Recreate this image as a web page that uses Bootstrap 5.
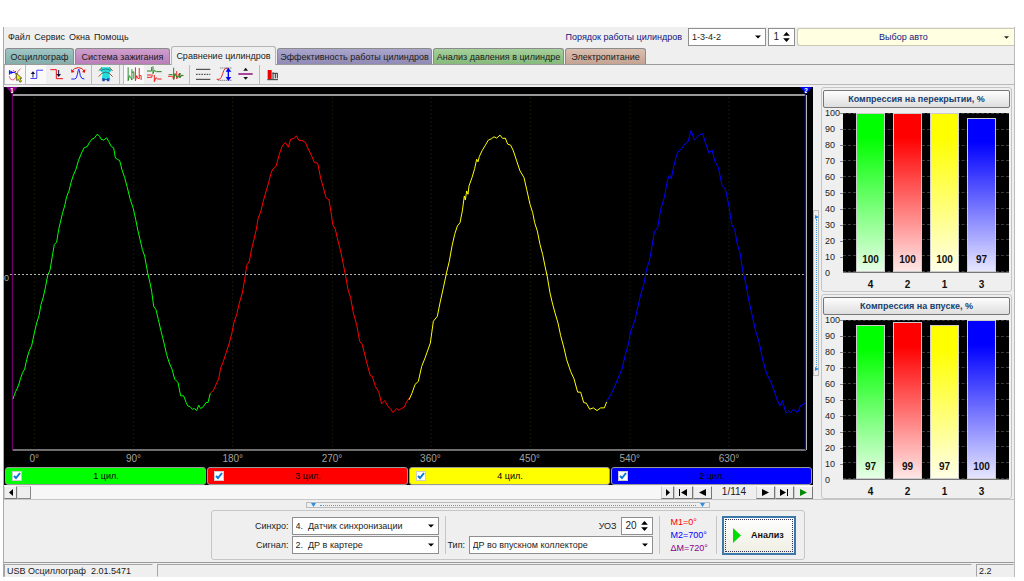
<!DOCTYPE html>
<html lang="ru">
<head>
<meta charset="utf-8">
<meta name="viewport" content="width=device-width, initial-scale=1">
<title>USB Осциллограф</title>
<link href="https://cdn.jsdelivr.net/npm/bootstrap@5.3.0/dist/css/bootstrap.min.css" rel="stylesheet">
<style>
:root{--face:#efefef;--edge:#9a9a9a;--soft:#c6c6c6;--navy:#14147c}
body{font-family:"Liberation Sans",Arial,sans-serif;font-size:9px;line-height:12px;color:#1c1c1c;background:#fff}
button,input,select{font:inherit;color:inherit}
.app{padding:27px 9px 4px 3px}
.win{background:var(--face);border-left:1px solid #aaa;border-right:1px solid #bbb}
.win button{white-space:nowrap}

.menubar{height:20px}
.menubar a{color:inherit;text-decoration:none}
.headctl{gap:2px}
.navy{color:var(--navy)}
.combo{height:18px;padding:0 16px 0 3px;border:1px solid #8f8f8f;border-radius:0;appearance:none;background:#fff url("data:image/svg+xml,%3Csvg xmlns='http://www.w3.org/2000/svg' viewBox='0 0 8 4'%3E%3Cpath d='M0 0h8L4 4z'/%3E%3C/svg%3E") no-repeat right 4px center/6px 4px}
.spin{height:18px;border:1px solid #8f8f8f;background:#fff}
.spin input{width:15px;border:0;padding:0;text-align:right;background:none;font-size:10px;appearance:textfield;outline:0}
.spin .short{width:10px}
.spin input::-webkit-inner-spin-button{display:none}
.order{width:78px}
.auto{width:217px;height:18px;padding:0 5px;border:1px solid #c9c9b4;border-right:0;border-radius:3px 0 0 3px;background:#ffffe1}

.tabs{border-bottom:1px solid var(--edge);height:18px;padding-left:1px;gap:1px}
.tabs button{height:16px;padding:0;border:1px solid #8a8a8a;border-bottom:0;border-radius:3px 3px 0 0;flex:0 0 auto}
.tabs .on{height:19px;margin-bottom:-1px;border-color:#b5b5b5;background:var(--face)}
.t1{width:69px;background:linear-gradient(#9fc6c5,#83acaa)}
.t2{width:95px;background:linear-gradient(#cf9fcd,#b97fb8)}
.t3{width:105px}
.t4{width:155px;background:linear-gradient(#aaa5cc,#908ab4)}
.t5{width:131px;background:linear-gradient(#a5d09b,#86b97b)}
.t6{width:81px;background:linear-gradient(#dabfb0,#c4a392)}

.tools{height:20px;border-bottom:1px solid #b9b9b9}
.tools button{width:21px;height:19px;padding:0;border:0;background:none;display:block}
.tools button.down{background:#f9f9f9;border-left:1px solid #bbb}
.tools svg{display:block;width:100%;height:19px;fill:none;stroke-width:3}
.tools i{width:7px;height:19px;background:linear-gradient(#bbb,#bbb) center/1px 100% no-repeat}

.work{padding-top:2px}
.trace{min-width:0}
.scope{background:#000}
.plotbox{margin:7px 7px 0 8px;min-height:300px}
.plotbox svg{display:block;width:100%;height:100%;position:absolute;inset:0;overflow:visible}
.plotbox polyline,.plotbox line{fill:none;vector-effect:non-scaling-stroke}
.zero{left:-8px;top:50%;color:#aaa}
.flag{top:-7px;width:12px;height:7px;clip-path:polygon(0 0,100% 0,50% 100%);color:#fff;font-size:7px;line-height:7px;font-weight:bold;text-align:center}
.axis{height:17px;margin:0 7px 0 8px;color:#a0a0a0;font-size:10px}
.axis span{position:absolute;top:3px;transform:translateX(-50%)}
.chans{gap:1px;padding:0 1px}
.chan{height:18px;border:1px solid #999;border-radius:3px;color:#000}
.chan label{padding-right:15px}
.chan input{appearance:none;width:10px;height:10px;margin:0 0 0 6px;border:1px solid #ccc;background:#fff}
.chan input:checked{background:#fff url("data:image/svg+xml,%3Csvg xmlns='http://www.w3.org/2000/svg' viewBox='0 0 8 8'%3E%3Cpath d='M1 4l2 2 4-5' fill='none' stroke='%230a7bd8' stroke-width='2'/%3E%3C/svg%3E") center/8px 8px no-repeat}

.player{height:13px;margin-top:1px;background:#f7f7f7}
.player button{height:13px;padding:0;border:1px solid;border-color:#fff #777 #777 #ccc;background:var(--face);display:flex;align-items:center;justify-content:center}
.player svg{height:7px;display:block}
.player .b1{width:13px}
.player .b2{width:19px}
.player output{width:44px;text-align:center;font-size:10px;background:var(--face)}
.seek{appearance:none;min-width:0;height:13px;margin:0;background:#f7f7f7}
.seek::-webkit-slider-thumb{appearance:none;width:14px;height:13px;background:var(--face);border:1px solid;border-color:#ddd #888 #888 #ddd}

.vgrip{width:6px;height:166px;border:1px solid #bbb}
.vgrip span{width:1px;border-left:1px dotted #4b9fe0}
.hgrip{width:404px;height:6px;border:1px solid #bbb;padding:0 4px}
.hgrip span{height:1px;border-top:1px dotted #4b9fe0;margin:0 4px}
.vgrip svg,.hgrip svg{width:5px;height:4px;fill:#2a8fe0;display:block}

.side{width:191px;gap:2px;margin:0 2px}
.gauge{border:1px solid var(--soft);border-radius:3px;padding:2px 1px 0 1px}
.gauge h2{margin:0}
.gauge h2 button{width:100%;height:18px;padding:0;border:1px solid #777;border-radius:2px;background:linear-gradient(#fdfdfd,#dedede);font-size:9px;font-weight:bold;color:#17406f;display:block}
.scale{width:17px;padding-left:2px;height:172px;margin-top:-1px}
.field{height:160px;margin:5px 1px 0 0;background:#000;border-bottom:1px solid #777}
.lines{position:absolute;inset:0}
.lines b{display:block;height:0;border-top:1px dashed #3c3c3c}
.ticks{width:3px;height:160px;margin-top:5px;background:repeating-linear-gradient(#888 0 1px,transparent 1px 16px)}
.bars{position:absolute;inset:0;padding:0 9px}
.slot{flex:1 1 0;display:flex;align-items:flex-end;justify-content:center}
.bar1{width:76%;border:1px solid #ccc;display:flex;align-items:flex-end;justify-content:center;font-size:10px;font-weight:bold;color:#111;padding-bottom:5px}
.cg{background:linear-gradient(#0f0 15%,#e6ffe6)}
.cr{background:linear-gradient(#f00 15%,#ffe6e6)}
.cy{background:linear-gradient(#ff0 15%,#ffffe6)}
.cb{background:linear-gradient(#00f 15%,#e6e6ff)}
.names{font-size:10px;font-weight:bold;color:#111;padding:0 10px 0 29px}
.names span{flex:1 1 0;text-align:center}

.bottom{padding:2px 3px 2px 0;gap:2px;border-top:1px solid var(--soft);border-bottom:1px solid var(--edge)}
.setup{border:1px solid var(--soft);border-radius:3px;width:594px;height:50px;padding:3px 4px}
.setup label{color:#222}
.vrule{width:1px;height:38px;background:var(--soft);margin:0 2px 0 6px}
.vrule.wide{margin-right:11px}
.vrule.slim{margin:0 5px 0 0}
.pair{row-gap:1px;column-gap:3px;display:grid;align-items:center}
.s1{grid-template-columns:73px 147px;justify-items:end}
.s2{grid-template-columns:18px 184px}
.s1 .combo,.s2 .combo{width:100%}
.marks{line-height:13px;width:45px}
.go{width:74px;height:39px;padding:0;border:2px solid #3c78ac;background:linear-gradient(#fff,#eeeee2);outline:1px dotted #335;outline-offset:-4px;font-weight:bold;color:#111}
.go svg{width:8px;height:15px;fill:#0d0}

.status{padding-top:1px}
.status div{height:13px;border:1px solid;border-color:#a5a5a5 transparent transparent #a5a5a5;padding-left:2px;line-height:12px}
.status .ver{width:149px}
.status .rel{width:38px}
</style>
</head>
<body>
<div class="app min-vh-100 d-flex flex-column">
<div class="win flex-grow-1 d-flex flex-column">

<header class="menubar d-flex align-items-center">
  <nav class="d-flex gap-1 ps-1" aria-label="Меню">
    <a href="#">Файл</a><a href="#">Сервис</a><a href="#">Окна</a><a href="#">Помощь</a>
  </nav>
  <div class="headctl ms-auto d-flex align-items-center">
    <label for="order" class="navy me-1">Порядок работы цилиндров</label>
    <select id="order" class="combo order"><option>1-3-4-2</option></select>
    <div class="spin d-flex align-items-center">
      <input type="number" class="short" value="1" aria-label="Номер цилиндра">
      <svg width="7" height="10" class="mx-1" viewBox="0 0 8 12" aria-hidden="true"><path d="M0 4.500h8L4 0zM0 7.500h8L4 12z"/></svg>
    </div>
    <button class="auto navy d-flex align-items-center"><span class="flex-grow-1 text-center">Выбор авто</span>
      <svg width="5" height="3" viewBox="0 0 8 4" fill="#222" aria-hidden="true"><path d="M0 0h8L4 4z"/></svg></button>
  </div>
</header>

<div class="tabs d-flex align-items-end" role="tablist">
  <button class="t1" role="tab">Осциллограф</button>
  <button class="t2" role="tab">Система зажигания</button>
  <button class="t3 on" role="tab" aria-selected="true">Сравнение цилиндров</button>
  <button class="t4" role="tab">Эффективность работы цилиндров</button>
  <button class="t5" role="tab">Анализ давления в цилиндре</button>
  <button class="t6" role="tab">Электропитание</button>
</div>

<div class="tools d-flex" role="toolbar">
  <button class="down" aria-label="Курсор"><svg viewBox="12 138 63 57"><path stroke="#e55" d="M25 172q3 12 12 12q9-2 12-16q3-14 12-20M38 152l22 36"/><path stroke="#00f" d="M26 153v14M29 160h14l4-4"/><path fill="#00f" d="M29 154v12l10-6z"/><path fill="#ee0" stroke="#222" stroke-width="2" d="M47 162l2 24 5-4 5 9 5-3-5-9 6-1z"/></svg></button>
  <button class="down" aria-label="Фронт вверх"><svg viewBox="75 138 63 57"><path stroke="#33f" d="M89 179h20v-26h20"/><path stroke="#114" d="M97 176v-16"/><path fill="#114" d="M90 165l7-9 7 9z"/></svg></button>
  <button aria-label="Фронт вниз"><svg viewBox="138 138 63 57"><path stroke="#e11" d="M151 152h18v27h20"/><path stroke="#114" d="M176 153v16"/><path fill="#114" d="M169 165l7 9 7-9z"/></svg></button>
  <button aria-label="Период"><svg viewBox="201 138 63 57"><path stroke="#22f" d="M214 180h10q6 0 8-13l3-15q2-4 3 2l3 16q2 10 12 10"/><path stroke="#e11" d="M217 156q5-10 18-10t17 10"/><path fill="#e11" d="M213 150l1 11 10-2zM256 150l-1 11-9-2z"/></svg></button>
  <i></i>
  <button aria-label="Сеть"><svg viewBox="286 138 63 57"><path fill="#2dd" d="M305 145h26l6 8-8 9 3 20h-26l3-20-9-8z"/><path stroke="#a52" d="M297 155l10-9M339 155l-10-9M297 173l12-12M339 173l-12-12"/><path stroke="#277" d="M304 155q14-10 28 0M308 163q10-8 20 0"/><path fill="#24a" d="M308 178h7v9h-7zM322 178h7v9h-7z"/><path stroke="#24a" d="M312 182h14"/></svg></button>
  <i></i>
  <button class="down" aria-label="Последовательно"><svg viewBox="371 138 63 57"><path stroke="#282" d="M384 144v42l4-16 4 6 4 8v-34"/><path stroke="#282" d="M396 160l6-2v22"/><path stroke="#e22" d="M407 144v42l4-16 3 8 5 2v-34M419 170h6v14"/></svg></button>
  <button aria-label="Параллельно"><svg viewBox="434 138 63 57"><path stroke="#282" d="M443 156h14v-12M461 142v22l4-10 6 4h16"/><path stroke="#e22" d="M443 175h14l2-8M465 168v20l5-12 5 4h12M443 168h14"/></svg></button>
  <button aria-label="Наложение"><svg viewBox="497 138 63 57"><path stroke="#e33" d="M506 172h14l3 10 4-18M532 156v24l5-12 4-6v14l5-6h6"/><path stroke="#282" d="M508 167h12M523 146v34l4-16 5 10h6l4-12v14l4-7h6"/></svg></button>
  <i></i>
  <button aria-label="Линии"><svg viewBox="581 138 63 57"><path stroke="#333" d="M590 151h43M590 181h43"/><path stroke="#333" stroke-dasharray="5 3" d="M590 166h43"/></svg></button>
  <button aria-label="Масштаб"><svg viewBox="644 138 63 57"><path stroke="#e22" d="M652 181h8q7-4 10-17t9-16h8"/><path stroke="#555" stroke-dasharray="3 3" d="M663 147h34M657 184h40"/><path stroke="#00f" stroke-width="4" d="M687 153v26"/><path fill="#00f" d="M679 158l8-12 9 12zM679 174l8 12 9-12z"/></svg></button>
  <button aria-label="Центр"><svg viewBox="707 138 63 57"><path stroke="#928" stroke-width="5" d="M717 165h43"/><path fill="#111" d="M732 155l7-9 7 9zM732 174l7 8 7-8z"/></svg></button>
  <i></i>
  <button aria-label="Отчёт"><svg viewBox="791 138 63 57"><path fill="#e00" d="M805 153h12v27h-12z"/><path stroke="#333" d="M804 182h32M821 160v20M828 163v15M834 163v15M820 163h15"/></svg></button>
</div>

<main class="work d-flex flex-grow-1">
  <section class="trace flex-grow-1 d-flex flex-column">
    <div class="scope flex-grow-1 d-flex flex-column">
      <div class="plotbox flex-grow-1 position-relative">
        <svg viewBox="36 45 2382 1065" preserveAspectRatio="none" role="img" aria-label="Осциллограмма">
          <g stroke="#2b2b05" stroke-dasharray="1 3">
            <line x1="103" x2="103" y1="55" y2="1104"/><line x1="401" x2="401" y1="55" y2="1104"/><line x1="698" x2="698" y1="55" y2="1104"/><line x1="997" x2="997" y1="55" y2="1104"/><line x1="1293" x2="1293" y1="55" y2="1104"/><line x1="1591" x2="1591" y1="55" y2="1104"/><line x1="1890" x2="1890" y1="55" y2="1104"/><line x1="2187" x2="2187" y1="55" y2="1104"/>
          </g>
          <line x1="30" x2="2412" y1="585" y2="585" stroke="#b5b5b5" stroke-dasharray="2 2"/>
          <line x1="38" x2="2418" y1="48" y2="48" stroke="#999" stroke-width="2"/>
          <line x1="38" x2="2418" y1="1110" y2="1110" stroke="#ddd"/>
          <line x1="2419" x2="2419" y1="48" y2="1110" stroke="#ddd"/>
          <line x1="37" x2="37" y1="27" y2="1110" stroke="#808"/>
          <line x1="2416" x2="2416" y1="27" y2="1110" stroke="#00f"/>
          <polyline stroke="#0f0" points="39,958 43,945 47,935 52,925 57,912 62,895 68,878 74,868 80,840 87,815 95,798 103,760 110,730 117,708 123,675 130,652 137,620 143,588 150,572 157,530 163,495 170,488 176,450 182,425 188,400 194,380 200,352 207,335 213,310 220,288 228,270 235,245 243,225 252,206 262,202 268,190 276,180 283,177 292,165 299,172 303,180 311,183 320,176 326,187 334,202 341,206 346,236 353,241 359,244 366,272 374,295 382,325 390,358 400,388 407,420 414,455 420,480 427,510 434,530 443,580 450,610 455,635 461,680 468,690 475,720 484,758 492,790 500,825 508,850 516,868 524,898 534,908 542,948 551,948 558,967 563,978 570,980 577,988 583,986 590,992 596,976 602,986 610,980 618,968 624,968 631,940"/>
          <polyline stroke="#f00" points="631,940 640,932 650,910 656,897 662,865 670,845 678,820 688,790 696,758 702,728 710,705 718,670 727,640 734,600 740,558 748,545 755,508 762,480 769,450 774,418 782,398 790,365 800,330 806,310 812,285 818,270 828,262 838,225 847,200 856,190 865,204 872,180 882,178 889,170 897,184 906,184 916,190 925,210 935,230 943,250 953,252 962,297 970,325 978,355 987,362 994,405 998,435 1006,450 1014,485 1022,515 1030,555 1037,590 1044,630 1052,655 1060,700 1070,735 1079,785 1087,795 1098,840 1111,888 1117,890 1126,920 1136,935 1145,972 1154,962 1164,980 1171,986 1179,998 1190,986 1197,991 1204,986 1213,982 1220,965 1227,955"/>
          <polyline stroke="#ff0" points="1227,960 1236,940 1245,914 1255,905 1265,860 1275,835 1291,790 1300,725 1312,710 1320,670 1330,625 1340,578 1348,545 1356,500 1364,465 1372,440 1380,430 1387,395 1393,350 1396,362 1400,335 1404,345 1407,320 1416,295 1424,268 1430,240 1434,248 1438,232 1446,215 1455,200 1465,183 1474,179 1482,173 1490,177 1500,168 1508,178 1516,177 1523,195 1532,198 1540,215 1550,245 1560,275 1572,295 1580,330 1590,375 1598,400 1604,430 1612,455 1620,495 1628,525 1635,560 1642,592 1650,640 1657,670 1665,700 1674,730 1682,768 1692,805 1700,840 1712,875 1722,897 1733,937 1742,937 1751,968 1759,970 1769,988 1780,984 1791,992 1802,984 1813,984 1820,966"/>
          <polyline stroke="#00f" transform="translate(1620)" points="200,965 212,945 224,920 233,898 246,868 256,825 266,790 272,755 284,725 293,685 302,645 312,612 320,568 328,545 336,500 343,458 353,445 362,390 373,355 382,305 388,288 394,298 401,262 409,230 416,215 424,210 434,195 444,188 453,154 463,183 470,175 478,168 488,163 496,190 507,222 516,212 525,248 535,265 546,318 556,330 566,375 575,435 584,450 592,495 600,520 608,572 617,610 627,665 637,710 648,758 658,790 668,840 680,882 692,905 704,937 712,962 720,978 727,962 738,1000 746,992 752,998 760,988 773,998 782,977 790,973 797,968"/>
        </svg>
        <span class="zero position-absolute">0</span>
        <span class="flag position-absolute start-0 translate-middle-x" style="background:#808">1</span>
        <span class="flag position-absolute start-100 translate-middle-x" style="background:#00f">2</span>
      </div>
      <div class="axis position-relative">
        <span style="left:2.8%">0°</span><span style="left:15.3%">90°</span><span style="left:27.8%">180°</span><span style="left:40.3%">270°</span><span style="left:52.7%">360°</span><span style="left:65.2%">450°</span><span style="left:77.8%">540°</span><span style="left:90.3%">630°</span>
      </div>
      <div class="chans d-flex">
        <div class="chan flex-fill d-flex align-items-center" style="background:#0f0"><input type="checkbox" id="c1" checked><label for="c1" class="flex-grow-1 text-center">1 цил.</label></div>
        <div class="chan flex-fill d-flex align-items-center" style="background:#f00"><input type="checkbox" id="c2" checked><label for="c2" class="flex-grow-1 text-center">3 цил.</label></div>
        <div class="chan flex-fill d-flex align-items-center" style="background:#ff0"><input type="checkbox" id="c3" checked><label for="c3" class="flex-grow-1 text-center">4 цил.</label></div>
        <div class="chan flex-fill d-flex align-items-center" style="background:#00f"><input type="checkbox" id="c4" checked><label for="c4" class="flex-grow-1 text-center">2 цил.</label></div>
      </div>
    </div>
    <div class="player d-flex">
      <button class="b1" aria-label="Влево"><svg viewBox="0 0 4 7"><path d="M4 0v7L0 3.500z"/></svg></button>
      <input type="range" class="seek flex-grow-1" value="0" aria-label="Прокрутка">
      <button class="b1" aria-label="Вправо"><svg viewBox="0 0 4 7"><path d="M0 0v7l4-3.500z"/></svg></button>
      <button class="b2" aria-label="В начало"><svg viewBox="0 0 9 7"><path d="M0 0h1v7H0zM8 0v7L2 3.500z"/></svg></button>
      <button class="b2" aria-label="Назад"><svg viewBox="0 0 7 7"><path d="M7 0v7L0 3.500z"/></svg></button>
      <output>1/114</output>
      <button class="b2" aria-label="Вперёд"><svg viewBox="0 0 7 7"><path d="M0 0v7l7-3.500z"/></svg></button>
      <button class="b2" aria-label="В конец"><svg viewBox="0 0 9 7"><path d="M0 0v7l6-3.500zM7 0h1v7H7z"/></svg></button>
      <button class="b2" aria-label="Пуск"><svg viewBox="0 0 7 7" fill="#080"><path d="M0 0v7l7-3.500z"/></svg></button>
    </div>
  </section>

  <div class="vgrip d-flex flex-column align-items-center justify-content-between align-self-center py-1">
    <svg viewBox="0 0 5 4"><path d="M1 0v4l4-2z"/></svg><span class="flex-grow-1"></span><svg viewBox="0 0 5 4"><path d="M1 0v4l4-2z"/></svg>
  </div>

  <aside class="side d-flex flex-column">
    <section class="gauge flex-fill">
      <h2><button>Компрессия на перекрытии, %</button></h2>
      <div class="d-flex">
        <div class="scale d-flex flex-column justify-content-between"><span>100</span><span>90</span><span>80</span><span>70</span><span>60</span><span>50</span><span>40</span><span>30</span><span>20</span><span>10</span><span>0</span></div>
        <div class="ticks"></div>
        <div class="field flex-grow-1 position-relative">
          <div class="lines d-flex flex-column justify-content-between"><b></b><b></b><b></b><b></b><b></b><b></b><b></b><b></b><b></b><b></b><b></b></div>
          <div class="bars d-flex">
            <div class="slot"><div class="bar1 cg" style="height:100%">100</div></div>
            <div class="slot"><div class="bar1 cr" style="height:100%">100</div></div>
            <div class="slot"><div class="bar1 cy" style="height:100%">100</div></div>
            <div class="slot"><div class="bar1 cb" style="height:97%">97</div></div>
          </div>
        </div>
      </div>
      <div class="names d-flex"><span>4</span><span>2</span><span>1</span><span>3</span></div>
    </section>
    <section class="gauge flex-fill">
      <h2><button>Компрессия на впуске, %</button></h2>
      <div class="d-flex">
        <div class="scale d-flex flex-column justify-content-between"><span>100</span><span>90</span><span>80</span><span>70</span><span>60</span><span>50</span><span>40</span><span>30</span><span>20</span><span>10</span><span>0</span></div>
        <div class="ticks"></div>
        <div class="field flex-grow-1 position-relative">
          <div class="lines d-flex flex-column justify-content-between"><b></b><b></b><b></b><b></b><b></b><b></b><b></b><b></b><b></b><b></b><b></b></div>
          <div class="bars d-flex">
            <div class="slot"><div class="bar1 cg" style="height:97%">97</div></div>
            <div class="slot"><div class="bar1 cr" style="height:99%">99</div></div>
            <div class="slot"><div class="bar1 cy" style="height:97%">97</div></div>
            <div class="slot"><div class="bar1 cb" style="height:100%">100</div></div>
          </div>
        </div>
      </div>
      <div class="names d-flex"><span>4</span><span>2</span><span>1</span><span>3</span></div>
    </section>
  </aside>
</main>

<section class="bottom d-flex flex-column align-items-center">
  <div class="hgrip d-flex align-items-center">
    <svg viewBox="0 0 5 4"><path d="M0 0h5L2.500 4z"/></svg><span class="flex-grow-1"></span><svg viewBox="0 0 5 4"><path d="M0 0h5L2.500 4z"/></svg>
  </div>
  <div class="setup d-flex align-items-center">
    <div class="pair s1">
      <label for="sync">Синхро:</label><select id="sync" class="combo"><option>4.&nbsp; Датчик синхронизации</option></select>
      <label for="sig">Сигнал:</label><select id="sig" class="combo"><option>2.&nbsp; ДР в картере</option></select>
    </div>
    <div class="vrule"></div>
    <div class="pair s2">
      <span></span>
      <div class="d-flex justify-content-end align-items-center gap-1"><label for="uoz">УОЗ</label>
        <div class="spin d-flex align-items-center"><input type="number" id="uoz" value="20"><svg width="7" height="10" class="mx-1" viewBox="0 0 8 12" aria-hidden="true"><path d="M0 4.500h8L4 0zM0 7.500h8L4 12z"/></svg></div></div>
      <label for="typ">Тип:</label><select id="typ" class="combo"><option>ДР во впускном коллекторе</option></select>
    </div>
    <div class="vrule wide"></div>
    <div class="marks"><div style="color:#f00">M1=0°</div><div style="color:#00f">M2=700°</div><div style="color:#808">ΔM=720°</div></div>
    <div class="vrule slim"></div>
    <button class="go d-flex align-items-center justify-content-evenly"><svg viewBox="0 0 8 15" aria-hidden="true"><path d="M0 0v15l8-7.500z"/></svg><span>Анализ</span></button>
  </div>
</section>

<footer class="status d-flex gap-1">
  <div class="ver">USB Осциллограф&nbsp; 2.01.5471</div>
  <div class="flex-grow-1"></div>
  <div class="rel">2.2</div>
</footer>

</div>
</div>
<script src="https://cdn.jsdelivr.net/npm/bootstrap@5.3.0/dist/js/bootstrap.bundle.min.js"></script>
</body>
</html>
